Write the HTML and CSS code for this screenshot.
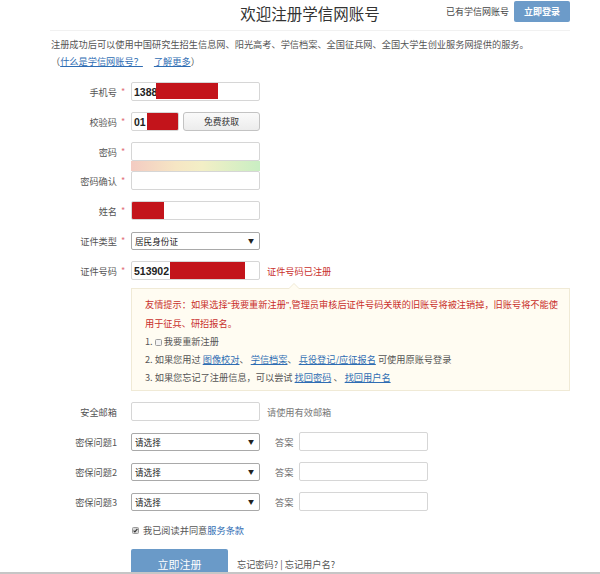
FILE: index.html
```html
<!DOCTYPE html>
<html lang="zh-CN">
<head>
<meta charset="utf-8">
<title>欢迎注册学信网账号</title>
<link rel="stylesheet" href="styles.css">
</head>
<body>
<div class="page">
  <header class="header">
    <h1 class="title">欢迎注册学信网账号</h1>
    <div class="account">
      <span class="account-text">已有学信网账号</span>
      <a class="login-btn">立即登录</a>
    </div>
  </header>

  <div class="intro">
    <p class="intro-line">注册成功后可以使用中国研究生招生信息网、阳光高考、学信档案、全国征兵网、全国大学生创业服务网提供的服务。</p>
    <p class="intro-line">（<a class="link">什么是学信网账号？</a><a class="link link-gap">了解更多</a>）</p>
  </div>

  <div class="form">
    <div class="row">
      <span class="label">手机号</span><span class="star">*</span>
      <div class="input"><span class="val">1388</span><span class="redact redact-phone"></span></div>
    </div>

    <div class="row">
      <span class="label">校验码</span><span class="star">*</span>
      <div class="input input-code"><span class="val">01</span><span class="redact redact-code"></span></div>
      <div class="code-btn">免费获取</div>
    </div>

    <div class="pw-group">
      <div class="row">
        <span class="label">密码</span><span class="star">*</span>
        <div class="input"></div>
      </div>
      <div class="strength"></div>
      <div class="row">
        <span class="label">密码确认</span><span class="star">*</span>
        <div class="input"></div>
      </div>
    </div>

    <div class="row">
      <span class="label">姓名</span><span class="star">*</span>
      <div class="input"><span class="redact redact-name"></span></div>
    </div>

    <div class="row">
      <span class="label">证件类型</span><span class="star">*</span>
      <div class="select"><span>居民身份证</span><span class="arrow">▼</span></div>
    </div>

    <div class="row">
      <span class="label">证件号码</span><span class="star">*</span>
      <div class="input"><span class="val">513902</span><span class="redact redact-id"></span></div>
      <span class="error">证件号码已注册</span>
    </div>

    <div class="tip">
      <p class="tip-line tip-warn">友情提示：如果选择<span class="q">“</span>我要重新注册<span class="q">”,</span>管理员审核后证件号码关联的旧账号将被注销掉，旧账号将不能使</p>
      <p class="tip-line tip-warn">用于征兵、研招报名。</p>
      <p class="tip-line">1. <span class="box"></span> 我要重新注册</p>
      <p class="tip-line">2. 如果您用过 <a class="link">图像校对</a>、 <a class="link">学信档案</a>、 <a class="link">兵役登记/应征报名</a> 可使用原账号登录</p>
      <p class="tip-line">3. 如果您忘记了注册信息，可以尝试 <a class="link">找回密码</a> 、 <a class="link">找回用户名</a></p>
    </div>

    <div class="row">
      <span class="label">安全邮箱</span><span class="star"></span>
      <div class="input"></div>
      <span class="hint">请使用有效邮箱</span>
    </div>

    <div class="row">
      <span class="label">密保问题1</span><span class="star"></span>
      <div class="select"><span>请选择</span><span class="arrow">▼</span></div>
      <span class="answer-label">答案</span>
      <div class="input"></div>
    </div>

    <div class="row">
      <span class="label">密保问题2</span><span class="star"></span>
      <div class="select"><span>请选择</span><span class="arrow">▼</span></div>
      <span class="answer-label">答案</span>
      <div class="input"></div>
    </div>

    <div class="row">
      <span class="label">密保问题3</span><span class="star"></span>
      <div class="select"><span>请选择</span><span class="arrow">▼</span></div>
      <span class="answer-label">答案</span>
      <div class="input"></div>
    </div>

    <div class="agree">
      <svg class="check" width="7" height="7" viewBox="0 0 7 7"><rect x="0.5" y="0.5" width="6" height="6" rx="1" fill="#d9d9d9" stroke="#9a9a9a"/><path d="M1.6 3.6 L2.9 4.9 L5.4 1.9" fill="none" stroke="#333" stroke-width="1.1"/></svg>
      <span>我已阅读并同意<a class="terms">服务条款</a></span>
    </div>

    <div class="submit-row">
      <div class="submit-btn">立即注册</div>
      <span class="forgot">忘记密码? | 忘记用户名?</span>
    </div>
  </div>
</div>
</body>
</html>
```

FILE: styles.css
```css
* { box-sizing: border-box; }

body {
  margin: 0;
  background: #fff;
  font-family: "Noto Sans CJK SC", "Noto Sans", sans-serif;
  font-size: 9.2px;
  color: #555;
}

p { margin: 0; }
a { cursor: pointer; }

.page {
  height: 572px;
  border-bottom: 2px solid #c6c6c6;
  box-sizing: content-box;
  overflow: hidden;
}

/* header */
.header {
  margin: 0 30px 0 50px;
  height: 31px;
  border-bottom: 1px solid #f1f1f1;
  display: grid;
  grid-template-columns: 1fr auto 1fr;
  align-items: start;
}

.title {
  grid-column: 2;
  margin: 0;
  font-size: 15.5px;
  font-weight: normal;
  line-height: 26px;
  color: #333;
}

.account {
  justify-self: end;
  display: flex;
  align-items: center;
  gap: 5px;
  margin-top: 1px;
}

.account-text { font-size: 9px; color: #444; }

.login-btn {
  width: 56px;
  height: 21px;
  border-radius: 2px;
  background: #6c9bc9;
  color: #fff;
  font-size: 9px;
  font-weight: bold;
  display: flex;
  align-items: center;
  justify-content: center;
}

/* intro */
.intro {
  margin: 5px 0 0 51px;
  line-height: 17px;
}

.link { color: #2f6db3; text-decoration: underline; }
.link-gap { margin-left: 11px; }

/* form */
.form {
  padding-top: 12px;
  display: flex;
  flex-direction: column;
  gap: 11px;
}

.row {
  display: flex;
  align-items: center;
  height: 19px;
}

.label {
  width: 117px;
  text-align: right;
  color: #555;
}

.star {
  width: 14px;
  padding-right: 2px;
  text-align: center;
  color: #e2727a;
  font-size: 9px;
}

.input {
  position: relative;
  width: 129px;
  height: 19px;
  border: 1px solid #d6d6d6;
  border-radius: 2px;
  background: #fff;
  display: flex;
  align-items: center;
  padding-left: 2px;
  overflow: hidden;
}

.val {
  font-family: "Liberation Sans", Arial, sans-serif;
  font-weight: bold;
  font-size: 10.5px;
  color: #222;
}

.redact {
  position: absolute;
  top: -1px;
  bottom: 0;
  background: #c3141b;
}
.redact-phone { left: 24px; width: 62px; bottom: 1px; }
.redact-code { left: 15px; right: -1px; bottom: 0; }
.redact-name { left: -1px; width: 33px; }
.redact-id { left: 38px; width: 75px; }

.input-code { width: 48px; }

.code-btn {
  margin-left: 4px;
  width: 77px;
  height: 19px;
  border: 1px solid #c3c3c3;
  border-radius: 3px;
  background: linear-gradient(#fafafa, #ececec);
  color: #333;
  display: flex;
  align-items: center;
  justify-content: center;
  font-size: 8.8px;
}

.pw-group {
  display: flex;
  flex-direction: column;
}

.strength {
  margin-left: 131px;
  width: 129px;
  height: 10px;
  background: linear-gradient(90deg, #f3cbc2 0%, #f6e6c4 35%, #f3efc6 55%, #c9eec3 100%);
}

.select {
  width: 129px;
  height: 18px;
  border: 1px solid #a9a9a9;
  border-radius: 2px;
  background: #fff;
  display: flex;
  align-items: center;
  justify-content: space-between;
  padding: 0 5px 0 3px;
  color: #222;
  font-size: 8.6px;
}

.arrow { font-size: 6px; color: #222; }

.error {
  margin-left: 7px;
  color: #c9302c;
}

.hint {
  margin-left: 7px;
  color: #777;
}

.answer-label {
  margin-left: 15px;
  width: 24px;
  color: #666;
}

/* tip */
.tip {
  position: relative;
  margin: -3px 0 0 131px;
  width: 439px;
  height: 103px;
  border: 1px solid #f0ead6;
  background: #fffcf2;
  padding: 6px 10px 5px 13px;
  line-height: 18px;
  color: #555;
}

.tip::before,
.tip::after {
  content: "";
  position: absolute;
  left: 156px;
  width: 0;
  height: 0;
  border-left: 6px solid transparent;
  border-right: 6px solid transparent;
}
.tip::before { top: -6px; border-bottom: 6px solid #f0ead6; }
.tip::after { top: -5px; border-bottom: 6px solid #fffcf2; }

.tip-line { white-space: nowrap; }
.tip-warn { color: #c9302c; }
.q { font-family: "Liberation Sans", Arial, sans-serif; }

.box {
  display: inline-block;
  width: 7px;
  height: 7px;
  border: 1px solid #9d9d9d;
  border-radius: 1.5px;
  background: #f3f3f3;
  vertical-align: -1px;
}

/* agree + submit */
.agree {
  margin: 2px 0 0 132px;
  height: 12px;
  display: flex;
  align-items: center;
  gap: 4px;
  color: #555;
}

.check { flex: none; }

.terms { color: #2f6db3; }

.submit-row {
  margin: 2px 0 0 131px;
  display: flex;
  align-items: center;
  gap: 9px;
}

.submit-btn {
  width: 97px;
  height: 30px;
  border-radius: 2px;
  background: #6a9ac8;
  color: #fff;
  font-size: 11px;
  display: flex;
  align-items: center;
  justify-content: center;
}

.forgot { color: #555; }
```
